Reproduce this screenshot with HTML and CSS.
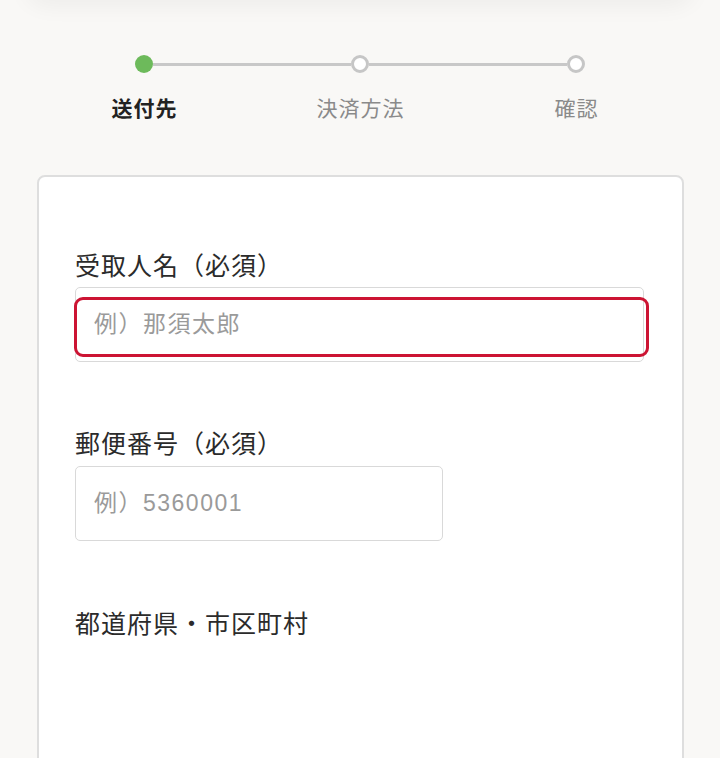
FILE: index.html
```html
<!DOCTYPE html>
<html lang="ja">
<head>
<meta charset="utf-8">
<title>送付先</title>
<link rel="stylesheet" href="styles.css">
</head>
<body>
<div class="topbar"></div>
<main class="page">
  <div class="stepper">
    <div class="track">
      <span class="dot dot-active"></span>
      <span class="bar"></span>
      <span class="dot"></span>
      <span class="bar"></span>
      <span class="dot"></span>
    </div>
    <div class="step-labels">
      <span class="step-label step-label-active">送付先</span>
      <span class="step-label">決済方法</span>
      <span class="step-label">確認</span>
    </div>
  </div>

  <section class="card">
    <div class="field">
      <label class="field-label" for="name">受取人名（必須）</label>
      <div class="input-wrap">
        <input class="input input-full" id="name" type="text" placeholder="例）那須太郎">
        <span class="focus-ring"></span>
      </div>
    </div>
    <div class="field">
      <label class="field-label" for="zip">郵便番号（必須）</label>
      <div class="input-wrap input-wrap-short">
        <input class="input" id="zip" type="text" placeholder="例）5360001">
      </div>
    </div>
    <div class="field">
      <label class="field-label" for="city">都道府県・市区町村</label>
    </div>
  </section>
</main>
</body>
</html>
```

FILE: styles.css
```css
* { box-sizing: border-box; }

html, body {
  margin: 0;
  padding: 0;
  background: #f9f8f6;
  font-family: "Noto Sans CJK JP", "Noto Sans", sans-serif;
  color: #2b2b2b;
  overflow: hidden;
}

.topbar {
  height: 24px;
  margin: -24px 24px 0;
  border-radius: 0 0 40px 40px;
  background: #f6f5f3;
  box-shadow: 0 6px 22px rgba(0, 0, 0, 0.05);
}

.page {
  padding-top: 55px;
}

.stepper {
  margin: 0 36px;
}

.track {
  display: flex;
  align-items: center;
  margin: 0 99px;
  height: 18px;
}

.dot {
  width: 18px;
  height: 18px;
  border-radius: 50%;
  border: 3px solid #c6c6c6;
  background: #ffffff;
  flex: none;
}

.dot-active {
  border: none;
  background: #6dba5b;
}

.bar {
  flex: 1;
  height: 3px;
  background: #c8c8c8;
}

.step-labels {
  display: grid;
  grid-template-columns: repeat(3, 1fr);
  margin-top: 19px;
}

.step-label {
  text-align: center;
  font-size: 21px;
  line-height: 30px;
  letter-spacing: 1px;
  padding-left: 1px;
  color: #8a8a8a;
}

.step-label-active {
  color: #222222;
  font-weight: 700;
}

.card {
  margin: 53px 36px 0 37px;
  background: #ffffff;
  border: 2px solid #dedede;
  border-radius: 8px;
  padding: 69px 38px 200px 36px;
  min-height: 700px;
}

.field-label {
  display: block;
  font-size: 25px;
  line-height: 36px;
  letter-spacing: 1px;
  color: #2b2b2b;
}

.input-wrap {
  position: relative;
  margin-top: 5px;
  margin-bottom: 62px;
}

.input-wrap-short {
  width: 368px;
  margin-top: 6px;
  margin-bottom: 63px;
}

.input {
  display: block;
  width: 100%;
  height: 75px;
  border: 1.5px solid #d9d9d9;
  border-radius: 5px;
  background: #ffffff;
  padding: 0 18px;
  font-family: "Liberation Sans", "Noto Sans CJK JP", sans-serif;
  font-size: 23px;
  letter-spacing: 1.5px;
  color: #2b2b2b;
  outline: none;
}

.input::placeholder {
  color: #9a9a9a;
  opacity: 1;
}

.focus-ring {
  position: absolute;
  left: -1px;
  right: -5px;
  top: 10px;
  bottom: 5px;
  border: 3px solid #cc1433;
  border-radius: 9px;
  pointer-events: none;
}
```
